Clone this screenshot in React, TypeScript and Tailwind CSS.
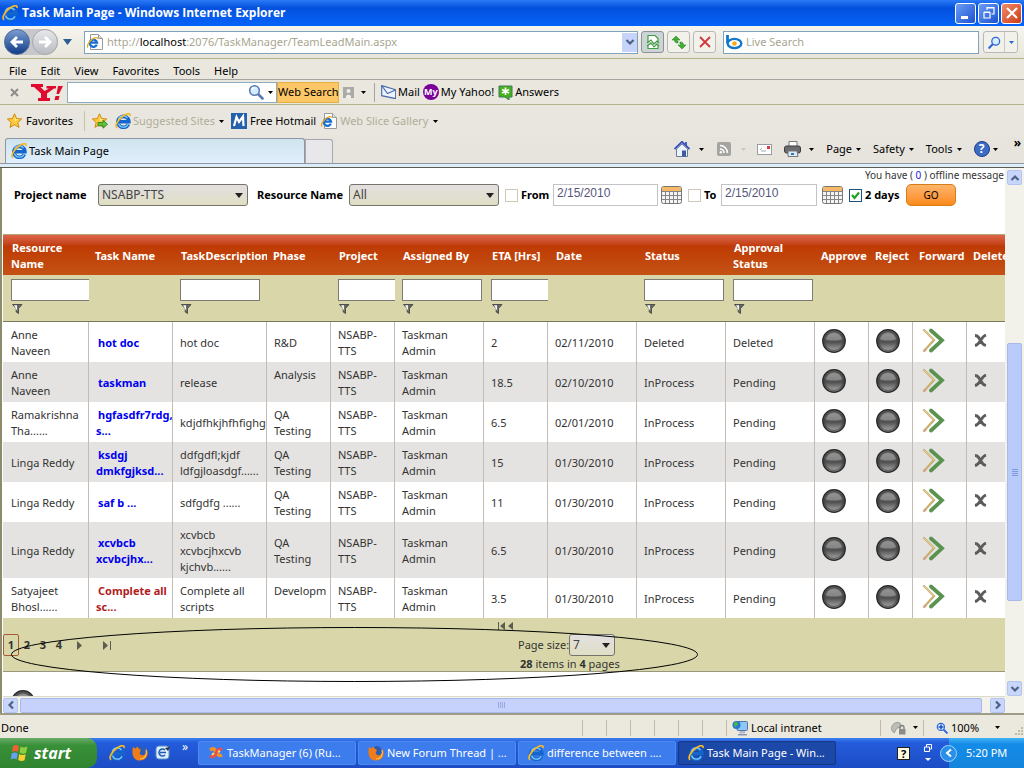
import type { ReactNode } from "react";

interface Task {
  resource: string[];
  name: string[];
  description: string[];
  phase: string[];
  eta: string;
  date: string;
  status: string;
  approval: string;
  closed?: boolean;
  tall?: boolean;
}

const tasks: Task[] = [
  { resource: ["Anne", "Naveen"], name: ["hot doc"], description: ["hot doc"], phase: ["R&D"], eta: "2", date: "02/11/2010", status: "Deleted", approval: "Deleted" },
  { resource: ["Anne", "Naveen"], name: ["taskman"], description: ["release"], phase: ["Analysis", "\u00a0"], eta: "18.5", date: "02/10/2010", status: "InProcess", approval: "Pending" },
  { resource: ["Ramakrishna", "Tha......"], name: ["hgfasdfr7rdg,", "s..."], description: ["kdjdfhkjhfhfighg"], phase: ["QA", "Testing"], eta: "6.5", date: "02/01/2010", status: "InProcess", approval: "Pending" },
  { resource: ["Linga Reddy"], name: ["ksdgj", "dmkfgjksd..."], description: ["ddfgdfl;kjdf", "ldfgjloasdgf......"], phase: ["QA", "Testing"], eta: "15", date: "01/30/2010", status: "InProcess", approval: "Pending" },
  { resource: ["Linga Reddy"], name: ["saf b ..."], description: ["sdfgdfg ......"], phase: ["QA", "Testing"], eta: "11", date: "01/30/2010", status: "InProcess", approval: "Pending" },
  { resource: ["Linga Reddy"], name: ["xcvbcb", "xcvbcjhx..."], description: ["xcvbcb", "xcvbcjhxcvb", "kjchvb......"], phase: ["QA", "Testing"], eta: "6.5", date: "01/30/2010", status: "InProcess", approval: "Pending", tall: true },
  { resource: ["Satyajeet", "Bhosl......"], name: ["Complete all", "sc..."], description: ["Complete all", "scripts"], phase: ["Developm", "\u00a0"], eta: "3.5", date: "01/30/2010", status: "InProcess", approval: "Pending", closed: true },
];

const columns: { lines: string[]; width: number; filter?: boolean; plain?: boolean }[] = [
  { lines: ["Resource", "Name"], width: 86, filter: true },
  { lines: ["Task Name"], width: 84, plain: true },
  { lines: ["TaskDescription"], width: 94, filter: true },
  { lines: ["Phase"], width: 64, plain: true },
  { lines: ["Project"], width: 64, filter: true },
  { lines: ["Assigned By"], width: 89, filter: true },
  { lines: ["ETA [Hrs]"], width: 64, filter: true },
  { lines: ["Date"], width: 89 },
  { lines: ["Status"], width: 89, filter: true },
  { lines: ["Approval", "Status"], width: 89, filter: true },
  { lines: ["Approve"], width: 54, plain: true },
  { lines: ["Reject"], width: 44, plain: true },
  { lines: ["Forward"], width: 54, plain: true },
  { lines: ["Delete"], width: 38, plain: true },
];

/* ---------- icons ---------- */

function IeIcon({ className = "size-4" }: { className?: string }) {
  return (
    <svg viewBox="0 0 16 16" className={`shrink-0 ${className}`} aria-hidden="true">
      <path d="M13.400 11.200A5.500 5.500 0 1 1 13.900 8.800H4" fill="none" stroke="#1466cc" strokeWidth="3.600" />
      <path d="M13 11.200A5 5 0 0 1 3.600 10.500M3.400 7a5 5 0 0 1 9-2" fill="none" stroke="#7cc8fa" strokeWidth="1.300" />
      <path d="M2.200 14.800C-.8 13.400 2.600 7 7.600 3.200 11.600.2 15.600-.4 15 3" fill="none" stroke="#f4b828" strokeWidth="1.700" />
    </svg>
  );
}

function PageIeIcon() {
  return (
    <svg viewBox="0 0 16 16" className="size-4 shrink-0" aria-hidden="true">
      <path d="M3.500 .500h8l4 4v11h-12z" fill="#fff" stroke="#9a9a9a" />
      <path d="M11.500 .500v4h4" fill="#ddd" stroke="#9a9a9a" />
      <path d="M9.800 10.600A3.600 3.600 0 1 1 10 8.600H3.500" fill="none" stroke="#1a6fd0" strokeWidth="2.400" />
      <path d="M1 13.400C-.6 12 2 7.600 5.600 5 8 3.300 10.400 3 10.800 4.600" fill="none" stroke="#f0a818" strokeWidth="1.300" />
    </svg>
  );
}

function Caret({ className = "text-black" }: { className?: string }) {
  return (
    <svg viewBox="0 0 5 3" className={`h-[3px] w-[5px] shrink-0 ${className}`} aria-hidden="true">
      <path d="M0 0h5L2.500 3z" fill="currentColor" />
    </svg>
  );
}

function Star({ arrow = false }: { arrow?: boolean }) {
  return (
    <svg viewBox="0 0 16 16" className="size-4 shrink-0" aria-hidden="true">
      <path d="M7.500.8l2.100 4.700 5.100.5-3.900 3.400 1.200 5-4.500-2.700-4.500 2.700 1.200-5L.4 6l5-.5z" fill="#ffc93a" stroke="#d08a10" />
      <path d="M7.500 3l1.200 3.300 3 .3L8 8z" fill="#fff3b0" />
      {arrow && <path d="M6 9.500h5V7.200l4.600 4-4.600 4v-2.400H6z" fill="#5cc23c" stroke="#2c7c1c" strokeWidth=".8" />}
    </svg>
  );
}

function Magnifier({ className = "size-4", color = "#2a66d8" }: { className?: string; color?: string }) {
  return (
    <svg viewBox="0 0 16 16" className={`shrink-0 ${className}`} aria-hidden="true">
      <path d="M9.500 9.500l5 5" stroke={color} strokeWidth="2.600" strokeLinecap="round" />
      <circle cx="6.500" cy="6.500" r="4.800" fill="#d4ecff" stroke={color} strokeWidth="1.600" />
      <path d="M3.800 6a3 3 0 0 1 3-2.400" fill="none" stroke="#fff" strokeWidth="1.200" />
    </svg>
  );
}

function Chevron({ turn = "" }: { turn?: string }) {
  return (
    <svg viewBox="0 0 10 10" className={`size-[10px] ${turn}`} aria-hidden="true">
      <path d="M1.500 3l3.500 3.500L8.500 3" fill="none" stroke="#4d6185" strokeWidth="2.200" />
    </svg>
  );
}

function Funnel() {
  return (
    <svg viewBox="0 0 11 10" className="h-[10px] w-[11px]" aria-hidden="true">
      <path d="M.5.5h9.500L6.500 4.500v5L4.200 8V4.500z" fill="#666" stroke="#3c3c3c" strokeWidth=".8" />
      <path d="M2 1.300h3L5.200 7z" fill="#f4f4f4" />
    </svg>
  );
}

function Orb() {
  return (
    <svg viewBox="0 0 24 24" className="size-6" aria-hidden="true">
      <defs>
        <linearGradient id="orb" x1="0" y1="0" x2="0" y2="1">
          <stop offset="0" stopColor="#7c7c7c" />
          <stop offset=".55" stopColor="#505050" />
          <stop offset="1" stopColor="#b4b4b4" />
        </linearGradient>
      </defs>
      <circle cx="12" cy="12" r="11.200" fill="url(#orb)" stroke="#2b2b2b" strokeWidth="1.400" />
      <path d="M4 10a8.300 8.300 0 0 1 16 0c-3 2-13 2-16 0z" fill="#c8c8c8" opacity=".4" />
      <circle cx="12" cy="12" r="9.600" fill="none" stroke="#383838" strokeWidth="1.600" opacity=".55" />
    </svg>
  );
}

function ForwardIcon() {
  return (
    <svg viewBox="0 0 23 25" className="h-[25px] w-[23px]" aria-hidden="true">
      <path d="M2 2l10 10L2 23" fill="none" stroke="#c8b070" strokeWidth="2.200" strokeLinecap="round" />
      <path d="M2 2l10 10" fill="none" stroke="#eadcae" strokeWidth=".8" />
      <path d="M9 2.500l11 9.800L9 22.500" fill="none" stroke="#5a9350" strokeWidth="3.800" strokeLinecap="round" />
      <circle cx="3" cy="22" r="1.300" fill="#e09a80" />
    </svg>
  );
}

function DeleteIcon() {
  return (
    <svg viewBox="0 0 13 13" className="size-[13px]" aria-hidden="true">
      <path d="M1 1.500c3 0 4 2 5.500 5S9.500 11 12 11.500M12 1C9 2 8 4 6.500 6.500S4 11 1 11.500" fill="none" stroke="#5c5c5c" strokeWidth="2.800" />
    </svg>
  );
}

function CalendarIcon() {
  return (
    <svg viewBox="0 0 21 18" className="h-[18px] w-[21px] shrink-0" aria-hidden="true">
      <rect x=".5" y=".5" width="20" height="17" rx="2" fill="#f4f4f4" stroke="#777" />
      <path d="M1 1h19v4H1z" fill="#f6b968" />
      <path d="M1 5.500h19M1 9.500h19M1 13.500h19M4.500 6v11M8.500 6v11M12.500 6v11M16.500 6v11" stroke="#858585" />
    </svg>
  );
}

/* ---------- browser chrome ---------- */

function TitleBar() {
  const button = "flex size-[21px] items-center justify-center rounded-[3px] border border-white";
  return (
    <header className="flex h-[26px] items-center bg-linear-to-b from-[#2a7af8] via-[#0450dc] via-30% to-[#0664fa] pr-[2px] pl-[2px]">
      <IeIcon />
      <h1 className="ml-1 flex-1 font-['Open_Sans','Noto_Sans',sans-serif] text-[12px] font-bold whitespace-nowrap text-white">
        Task Main Page - Windows Internet Explorer
      </h1>
      <div className="flex gap-[2px]">
        <button aria-label="Minimize" className={`${button} bg-linear-to-br from-[#6c9cf4] to-[#1c50d0]`}>
          <svg viewBox="0 0 14 14" className="size-[14px]"><path d="M2 10h7v3H2z" fill="#fff" /></svg>
        </button>
        <button aria-label="Restore" className={`${button} bg-linear-to-br from-[#6c9cf4] to-[#1c50d0]`}>
          <svg viewBox="0 0 14 14" className="size-[14px]">
            <path d="M5 4V1.500h7V8h-2.500M5 2h7M2 6.500h6V12H2zM2 6h6" fill="none" stroke="#fff" strokeWidth="1.200" />
          </svg>
        </button>
        <button aria-label="Close" className={`${button} bg-linear-to-br from-[#f08a68] to-[#cc3810]`}>
          <svg viewBox="0 0 14 14" className="size-[14px]"><path d="M2 2l10 10M12 2L2 12" stroke="#fff" strokeWidth="2.200" /></svg>
        </button>
      </div>
    </header>
  );
}

function AddressBar() {
  const button = "flex h-[22px] w-[23px] items-center justify-center rounded-[3px] border border-[#b8b8bc] bg-[#f2f1ea]";
  return (
    <div className="flex h-[33px] items-center border-b border-[#b5b487] bg-linear-to-b from-[#f6f5ee] to-[#e8e6dc] pr-[6px] pl-1">
      <div className="flex rounded-full bg-[#c8c8cc]">
        <button aria-label="Back" className="flex size-[26px] items-center justify-center rounded-full border border-[#4c6c98] bg-linear-to-b from-[#7c9cd0] to-[#123c88]">
          <svg viewBox="0 0 16 16" className="size-4"><path d="M14 8H3M8 3L3 8l5 5" fill="none" stroke="#fff" strokeWidth="2.800" /></svg>
        </button>
        <button aria-label="Forward" className="ml-[2px] flex size-[26px] items-center justify-center rounded-full border border-[#a8a8ac] bg-linear-to-b from-[#e8e8ec] to-[#b8bcc0]">
          <svg viewBox="0 0 16 16" className="size-4"><path d="M2 8h11M8 3l5 5-5 5" fill="none" stroke="#fff" strokeWidth="2.800" /></svg>
        </button>
      </div>
      <button aria-label="Recent pages" className="mx-[5px]">
        <svg viewBox="0 0 9 6" className="h-[6px] w-[9px]"><path d="M0 0h9L4.500 6z" fill="#2c5c90" /></svg>
      </button>
      <div className="ml-[7px] flex h-[23px] flex-1 items-center border border-[#7fa3bd] bg-white pl-[2px]">
        <PageIeIcon />
        <span className="ml-1 flex-1 whitespace-nowrap text-[#a8a690]">
          http://<span className="text-black">localhost</span>:2076/TaskManager/TeamLeadMain.aspx
        </span>
        <button aria-label="Show address list" className="flex h-[19px] w-[15px] items-center justify-center bg-[#c6d3fb]"><Chevron /></button>
      </div>
      <div className="mx-[3px] flex gap-[3px]">
        <button aria-label="Compatibility view" className="flex h-[22px] w-[23px] items-center justify-center rounded-[3px] border border-[#8a9298] bg-[#ccd4d8]">
          <svg viewBox="0 0 14 16" className="h-4 w-[14px]">
            <path d="M2 8V1.500h7l3 3V8M2 11v3.500h10V11" fill="#fff" stroke="#3fa03c" strokeWidth="1.200" />
            <path d="M1 9l4-3 3 4 3-3 2 2M1 12l4-3 3 4 3-3 2 2" fill="none" stroke="#3fa03c" strokeWidth="1.100" />
          </svg>
        </button>
        <button aria-label="Refresh" className={button}>
          <svg viewBox="0 0 16 16" className="size-4">
            <path d="M5 1L1 5h2.500c0 2 1 3 3.500 3V6C6 6 6 5.500 6 5h3z" fill="#3fae34" stroke="#2c8a28" strokeWidth=".6" transform="translate(0 1)" />
            <path d="M11 15l4-4h-2.500c0-2-1-3-3.500-3v2c1 0 1 .5 1 1H7z" fill="#3fae34" stroke="#2c8a28" strokeWidth=".6" />
          </svg>
        </button>
        <button aria-label="Stop" className={button}>
          <svg viewBox="0 0 12 12" className="size-3"><path d="M1 1l10 10M11 1L1 11" stroke="#d0383c" strokeWidth="1.800" /></svg>
        </button>
      </div>
      <label className="ml-1 flex h-[23px] w-[256px] items-center border border-[#7fa3bd] bg-white pl-[2px]">
        <svg viewBox="0 0 17 16" className="h-4 w-[17px] shrink-0" aria-hidden="true">
          <path d="M1.500 1v8.500" stroke="#1478c8" strokeWidth="2.800" />
          <ellipse cx="8.500" cy="9.500" rx="6.800" ry="4.600" fill="#fff" stroke="#1478c8" strokeWidth="2.400" />
          <circle cx="8.500" cy="9.500" r="2.300" fill="#f8a818" />
        </svg>
        <input aria-label="Live Search" placeholder="Live Search" className="ml-[3px] w-full outline-none placeholder:text-[#a8a690]" />
      </label>
      <div className="ml-1 flex h-[22px] w-[35px] items-center rounded-[3px] border border-[#b8b8bc] bg-[#f2f1ea]">
        <button aria-label="Search" className="flex h-full w-[21px] items-center justify-center border-r border-[#c8c8c8]">
          <Magnifier className="size-[13px] -scale-x-100" />
        </button>
        <button aria-label="Search options" className="flex flex-1 justify-center"><Caret className="text-[#2468d0]" /></button>
      </div>
    </div>
  );
}

function MenuBar() {
  return (
    <nav className="flex h-[21px] items-center gap-[14px] border-b border-[#a4a4a0] bg-[#e9e7de] pt-1 pl-[9px]">
      {["File", "Edit", "View", "Favorites", "Tools", "Help"].map((item) => (
        <button key={item}>{item}</button>
      ))}
    </nav>
  );
}

function YahooToolbar() {
  return (
    <div className="flex h-[25px] items-center border-b border-[#b5b487] bg-[#e9e7de] pl-[10px]">
      <button aria-label="Close toolbar">
        <svg viewBox="0 0 9 9" className="size-[9px]"><path d="M1 1l7 7M8 1L1 8" stroke="#8c8c8c" strokeWidth="2" /></svg>
      </button>
      <svg viewBox="0 0 32 17" className="mr-1 ml-3 h-[17px] w-8 shrink-0" role="img" aria-label="Yahoo!">
        <path d="M0 0h12v3H9.500l4 4L18 4.500h-2.500V2H25v2.500h-2l-7 5V14h3v3H7v-3h3V9.500L3 3H0z" fill="#e00c30" />
        <path d="M27 2h5l-4 8h-2.500zM24.500 12h4l-1 4h-4z" fill="#e00c30" />
      </svg>
      <div className="flex h-[21px] w-[210px] items-center border border-[#8cacc4] bg-white pr-[3px]">
        <input aria-label="Yahoo search" className="w-full min-w-0 outline-none" />
        <Magnifier className="size-4" color="#5a7ab0" />
        <button aria-label="Search history" className="ml-1"><Caret /></button>
      </div>
      <button className="h-[21px] w-[62px] border border-[#e4b040] bg-[#fdc767] whitespace-nowrap">Web Search</button>
      <svg viewBox="0 0 12 11" className="ml-1 h-[11px] w-3" aria-hidden="true">
        <path d="M0 0h11v11H8V9H3v2H0z" fill="#aaaaa8" /><circle cx="5.500" cy="4" r="2" fill="#f0efe8" /><path d="M3 9a3 3 0 0 1 5 0v2H3z" fill="#f0efe8" />
      </svg>
      <span className="mx-[6px] flex"><Caret /></span>
      <span className="mr-[6px] ml-[2px] h-[19px] w-px bg-[#a4a4a0]" />
      <button className="flex items-center gap-[2px]">
        <svg viewBox="0 0 15 14" className="h-[14px] w-[15px]" aria-hidden="true">
          <path d="M.7.700l14 4v9l-14-3z" fill="#eef4ff" stroke="#4c6ca8" strokeWidth="1.200" />
          <path d="M1 1l5.500 7.500L14.500 5" fill="none" stroke="#4c6ca8" strokeWidth="1.200" />
        </svg>
        Mail
      </button>
      <button className="ml-[3px] flex items-center gap-[2px]">
        <span className="flex size-4 items-center justify-center rounded-full bg-[#7b0099] text-[9px] font-bold text-white">My</span>
        My Yahoo!
      </button>
      <button className="ml-1 flex items-center gap-[2px]">
        <svg viewBox="0 0 15 15" className="size-[15px]" aria-hidden="true">
          <path d="M1 1h13v11h-3v3l-4-3H1z" fill="#49b01c" stroke="#3a7c5c" />
          <path d="M7.500 2.500v7.500M4 4.500l7 3.500M11 4.500L4 8" stroke="#fff" strokeWidth="1.700" />
        </svg>
        Answers
      </button>
    </div>
  );
}

function FavoritesBar() {
  return (
    <div className="flex h-8 items-center bg-[#e8e6de] pl-[7px]">
      <button className="flex items-center gap-[3px]"><Star />Favorites</button>
      <span className="mr-[7px] ml-[11px] h-5 w-px bg-[#c8c49c]" />
      <button aria-label="Add to favorites bar"><Star arrow /></button>
      <a href="#suggested" className="ml-[7px] flex items-center gap-[2px] text-[#b0ae98]"><IeIcon />Suggested Sites<span className="ml-[2px]"><Caret /></span></a>
      <a href="#hotmail" className="ml-[7px] flex items-center gap-[3px]">
        <svg viewBox="0 0 16 16" className="size-4" aria-hidden="true">
          <rect width="16" height="16" fill="#2460ac" />
          <path d="M3 13l2.500-9L8 9l4-5.500L12.500 13" fill="none" stroke="#fff" strokeWidth="2.200" />
        </svg>
        Free Hotmail
      </a>
      <a href="#gallery" className="ml-[5px] flex items-center gap-[3px] text-[#b0ae98]"><PageIeIcon />Web Slice Gallery<span className="ml-[2px]"><Caret /></span></a>
    </div>
  );
}

function TabBar() {
  return (
    <div className="flex h-[31px] flex-col bg-[#e6e4dd]">
      <div className="flex flex-1 items-end border-b border-[#8e98a4] pl-[5px]">
        <button className="flex h-[25px] w-[300px] shrink-0 items-center gap-[2px] rounded-t-[3px] border border-b-0 border-[#8e98a4] bg-linear-to-b from-[#cfe4ee] to-[#e0f0fc] pl-[5px]">
          <IeIcon />Task Main Page
        </button>
        <button aria-label="New tab" className="h-6 w-7 rounded-tr-[3px] border border-b-0 border-[#a8a8ac] bg-[#e8e8ea]" />
        <div className="ml-auto flex h-6 items-center self-start pr-[3px]">
          <svg viewBox="0 0 16 16" className="size-4" aria-label="Home" role="img">
            <path d="M2.500 8v7.500h11V8L8 3z" fill="#eef2fa" stroke="#6c7c9c" /><path d="M.5 8L8 .8 15.500 8M12 1v3.500" fill="none" stroke="#3850b8" strokeWidth="1.800" /><path d="M8 9.500h4v6H8z" fill="#3c5c9c" />
          </svg>
          <span className="ml-[9px]"><Caret /></span>
          <svg viewBox="0 0 14 14" className="ml-[13px] size-[14px]" aria-label="Feeds" role="img">
            <rect width="14" height="14" rx="2" fill="#a4a4a0" /><path d="M3 7a4 4 0 0 1 4 4M3 3.500A7.500 7.500 0 0 1 10.500 11" fill="none" stroke="#fff" strokeWidth="1.600" /><circle cx="3.800" cy="10.200" r="1.200" fill="#fff" />
          </svg>
          <span className="ml-[10px]"><Caret className="text-[#c8c8c0]" /></span>
          <svg viewBox="0 0 15 11" className="ml-[11px] h-[11px] w-[15px]" aria-label="Read mail" role="img">
            <rect x=".5" y=".5" width="14" height="10" fill="#fff" stroke="#9c9ca0" /><path d="M3 6l2-2M4 7h5" stroke="#a8a8ac" /><path d="M10 2h3v3h-3z" fill="#d84040" />
          </svg>
          <svg viewBox="0 0 17 16" className="ml-3 h-4 w-[17px]" aria-label="Print" role="img">
            <path d="M5 .500h8V6H5z" fill="#fff" stroke="#787878" /><rect x=".5" y="5" width="16" height="7" rx="2" fill="#6c6c70" stroke="#3c3c40" /><path d="M4 10h9l1 5.500H4z" fill="#dcecf8" stroke="#787878" /><path d="M7 12h3v2H7z" fill="#2c78b8" />
          </svg>
          <span className="mr-3 ml-2"><Caret /></span>
          {["Page", "Safety", "Tools"].map((item) => (
            <button key={item} className="mr-3 flex items-center gap-1">{item}<Caret /></button>
          ))}
          <span className="mr-[3px] flex size-4 items-center justify-center rounded-full border border-[#1c3c84] bg-[#3c6cc8] text-[12px] font-bold text-white">?</span>
          <Caret />
          <span className="mb-3 ml-4 text-[12px] leading-none font-bold">»</span>
        </div>
      </div>
      <div className="h-1 border-b border-[#5c5c4c] bg-[#dcecf8]" />
    </div>
  );
}

/* ---------- task page ---------- */

function GridSelect({ id, value, className }: { id: string; value: string; className: string }) {
  return (
    <div className={`relative ${className}`}>
      <select id={id} className="h-[22px] w-full appearance-none rounded-[3px] border border-[#74746c] bg-linear-to-b from-[#e2dfe0] to-[#e0dfc4] pl-[3px] text-[12px] leading-none font-normal text-[#444] outline-none">
        <option>{value}</option>
      </select>
      <svg viewBox="0 0 8 5" className="pointer-events-none absolute top-[9px] right-[5px] h-[5px] w-2"><path d="M0 0h8L4 5z" fill="#222" /></svg>
    </div>
  );
}

function DateField({ id, width }: { id: string; width: string }) {
  return (
    <input id={id} defaultValue="2/15/2010" className={`h-[22px] border border-[#c4c4c8] bg-white pb-1 pl-[3px] font-['Liberation_Sans','Arial',sans-serif] text-[12px] font-normal text-[#56567c] outline-none ${width}`} />
  );
}

function FilterForm() {
  const box = "size-[13px] shrink-0 appearance-none border border-[#cfcab8] bg-white";
  return (
    <form className="flex h-[66px] flex-col" onSubmit={(e) => e.preventDefault()}>
      <p className="h-4 pr-px text-right text-[10px] leading-[14px] text-[#333]">
        You have ( <a href="#messages" className="text-[#2020e0]">0</a> ) offline message
      </p>
      <div className="flex h-[22px] items-center pl-[11px] text-[11px] font-bold whitespace-nowrap text-black">
        <label htmlFor="project" className="w-[84px]">Project name</label>
        <GridSelect id="project" value="NSABP-TTS" className="w-[150px]" />
        <label htmlFor="resource" className="ml-[9px] w-[92px]">Resource Name</label>
        <GridSelect id="resource" value="All" className="w-[150px]" />
        <input id="useFrom" type="checkbox" className={`ml-[6px] ${box}`} />
        <label htmlFor="useFrom" className="w-[35px] pl-[3px]">From</label>
        <DateField id="from" width="w-[105px]" />
        <button type="button" aria-label="Pick from date" className="ml-[3px]"><CalendarIcon /></button>
        <input id="useTo" type="checkbox" className={`ml-[6px] ${box}`} />
        <label htmlFor="useTo" className="w-5 pl-[3px]">To</label>
        <DateField id="to" width="w-[96px]" />
        <button type="button" aria-label="Pick to date" className="ml-[5px]"><CalendarIcon /></button>
        <span className="relative ml-[6px] flex">
          <input id="days" type="checkbox" defaultChecked className="size-[13px] appearance-none border border-[#1c5180] bg-white" />
          <svg viewBox="0 0 13 13" className="pointer-events-none absolute inset-0 size-[13px]"><path d="M3 6l2.500 3L10 3.500" fill="none" stroke="#21a121" strokeWidth="2.200" /></svg>
        </span>
        <label htmlFor="days" className="w-[44px] pl-[3px]">2 days</label>
        <button className="h-[22px] w-[50px] rounded-[5px] border border-[#d87c18] bg-linear-to-b from-[#fdb468] to-[#fb8a14] text-[10px] font-normal">GO</button>
      </div>
    </form>
  );
}

function Lines({ lines, first = "" }: { lines: string[]; first?: string }) {
  return (
    <>
      {lines.map((line, i) => (
        <span key={line} className={i === 0 ? `block ${first}` : "block"}>{line}</span>
      ))}
    </>
  );
}

function Cell({ children }: { children: ReactNode }) {
  return (
    <td className="overflow-hidden border-r border-[#c4bcb4] p-0 pt-px pl-[7px] align-middle whitespace-nowrap first:pl-2 last:border-r-0">
      {children}
    </td>
  );
}

function TaskTable() {
  return (
    <table className="w-full table-fixed border-separate border-spacing-0 text-[11px] leading-4 text-[#333]">
      <colgroup>
        {columns.map((col) => (
          <col key={col.lines.join(" ")} style={{ width: col.width }} />
        ))}
      </colgroup>
      <thead>
        <tr className="h-[41px] bg-linear-to-b from-[#df6a4c] via-[#bf3a04] via-30% to-[#c45214] text-white">
          {columns.map((col) => (
            <th
              key={col.lines.join(" ")}
              className={`overflow-hidden border-t border-[#b4a878] p-0 pt-[2px] text-left align-middle font-bold whitespace-nowrap ${col.plain ? "pl-[6px]" : "pl-[7px] first:pl-2"}`}
            >
              <Lines lines={col.lines} first={col.plain ? "" : "indent-px"} />
            </th>
          ))}
        </tr>
        <tr className="h-[47px] bg-[#d9d7aa]">
          {columns.map((col) => (
            <td key={col.lines.join(" ")} className="overflow-hidden border-b border-[#78785c] p-0 pt-1 pl-[7px] align-top first:pl-2">
              {col.filter && (
                <>
                  <input aria-label={`Filter ${col.lines.join(" ")}`} className="block h-[22px] w-20 max-w-none border border-[#7c7c74] bg-white" />
                  <button aria-label="Filter options" className="mt-[3px] block pl-px"><Funnel /></button>
                </>
              )}
            </td>
          ))}
        </tr>
      </thead>
      <tbody>
        {tasks.map((task, i) => (
          <tr key={i} className={`${task.tall ? "h-14" : "h-10"} ${i % 2 ? "bg-[#e5e3e1]" : "bg-white"}`}>
            <Cell><Lines lines={task.resource} /></Cell>
            <Cell>
              <a href="#task" className={`font-bold ${task.closed ? "text-[#b01c1c]" : "text-[#0000f0]"}`}><Lines lines={task.name} first="indent-0.5" /></a>
            </Cell>
            <Cell><Lines lines={task.description} /></Cell>
            <Cell><Lines lines={task.phase} /></Cell>
            <Cell><Lines lines={["NSABP-", "TTS"]} /></Cell>
            <Cell><Lines lines={["Taskman", "Admin"]} /></Cell>
            <Cell>{task.eta}</Cell>
            <Cell>{task.date}</Cell>
            <Cell>{task.status}</Cell>
            <Cell>{task.approval}</Cell>
            <Cell><button aria-label="Approve" className="block pb-1"><Orb /></button></Cell>
            <Cell><button aria-label="Reject" className="block pb-1"><Orb /></button></Cell>
            <Cell><button aria-label="Forward" className="block pb-1 pl-[2px]"><ForwardIcon /></button></Cell>
            <Cell><button aria-label="Delete" className="block pb-1"><DeleteIcon /></button></Cell>
          </tr>
        ))}
      </tbody>
    </table>
  );
}

function Pager() {
  return (
    <div className="h-[54px] border-b border-[#98987c] bg-[#d9d7aa] text-[11px] leading-4 text-[#333]">
      <div className="flex h-4 justify-center pt-1 pl-1">
        <svg viewBox="0 0 16 8" className="h-2 w-4"><path d="M.5 0v8" stroke="#5c5c50" /><path d="M7 0v8L2 4zM15 0v8l-5-4z" fill="#5c5c50" /></svg>
      </div>
      <div className="grid grid-cols-2">
        <div className="flex h-[22px] items-center font-bold">
          <button className="h-[22px] w-4 rounded-[2px] border border-[#a85c34]">1</button>
          {["2", "3", "4"].map((page) => (
            <button key={page} className="w-4">{page}</button>
          ))}
          <button aria-label="Next page" className="ml-[10px]">
            <svg viewBox="0 0 5 9" className="h-[9px] w-[5px]"><path d="M0 0v9l5-4.500z" fill="#5c5c50" /></svg>
          </button>
          <button aria-label="Last page" className="ml-[21px]">
            <svg viewBox="0 0 8 9" className="h-[9px] w-2"><path d="M0 0v9l5-4.500z" fill="#5c5c50" /><path d="M7.500 0v9" stroke="#5c5c50" /></svg>
          </button>
        </div>
        <div className="pl-[14px]">
          <div className="flex h-[22px] items-center">
            <label htmlFor="pageSize" className="w-[51px] whitespace-nowrap">Page size:</label>
            <GridSelect id="pageSize" value="7" className="w-[46px]" />
          </div>
          <p className="pl-[2px]"><b>28</b> items in <b>4</b> pages</p>
        </div>
      </div>
    </div>
  );
}

function TaskPage() {
  const scrollButton = "flex size-[15px] shrink-0 items-center justify-center rounded-[2px] border border-[#b4c4f0] bg-[#c8d6fb]";
  return (
    <div className="flex flex-1 border-l-2 border-[#8c8c6c] bg-white pl-px">
      <main className="flex min-w-0 flex-1 flex-col overflow-hidden">
        <FilterForm />
        <TaskTable />
        <div className="relative">
          <Pager />
          {/* hand-drawn marker around the pager */}
          <svg viewBox="0 0 690 56" className="pointer-events-none absolute top-[9px] left-2 h-14 w-[690px]" aria-hidden="true">
            <ellipse cx="343.500" cy="27.500" rx="343" ry="27" fill="none" stroke="#000" />
          </svg>
        </div>
        <div className="flex h-6 items-end pl-2">
          <div className="h-[6px] w-6 overflow-hidden"><Orb /></div>
        </div>
        <div className="flex h-[17px] items-center border-t border-[#dcdccc] bg-[#f2f1ea]">
          <button aria-label="Scroll left" className={scrollButton}><Chevron turn="rotate-90" /></button>
          <div className="ml-[2px] flex h-[15px] flex-1 items-center justify-center gap-px rounded-[2px] border border-[#a8b8e8] bg-[#c6d2fc]">
            {[0, 1, 2, 3].map((n) => <span key={n} className="h-[6px] w-px bg-[#98a8e0]" />)}
          </div>
          <button aria-label="Scroll right" className={`ml-2 ${scrollButton}`}><Chevron turn="-rotate-90" /></button>
        </div>
      </main>
      <div className="flex w-[19px] shrink-0 flex-col items-center bg-[#f2f1ea] pt-[2px] pb-[17px]">
        <button aria-label="Scroll up" className={scrollButton}><Chevron turn="rotate-180" /></button>
        <div className="mt-[158px] flex h-[258px] w-[15px] flex-col items-center justify-center gap-px rounded-[2px] border border-[#a8b8e8] bg-[#b9cbfb]">
          {[0, 1, 2, 3].map((n) => <span key={n} className="h-px w-[6px] bg-[#7c98e0]" />)}
        </div>
        <button aria-label="Scroll down" className={`mt-auto ${scrollButton}`}><Chevron /></button>
      </div>
    </div>
  );
}

/* ---------- status bar and taskbar ---------- */

function StatusBar() {
  const pane = "flex h-4 items-center border-l border-[#c0bca8]";
  return (
    <div className="flex h-[25px] items-center border-t-2 border-[#9c9c88] bg-[#ebe9dd] pt-[2px]">
      <span className="flex-1 pl-px">Done</span>
      {[0, 1, 2, 3, 4, 5].map((n) => <span key={n} className={`w-6 ${pane}`} />)}
      <span className={`w-[154px] gap-[3px] pl-[5px] ${pane}`}>
        <svg viewBox="0 0 16 16" className="size-4" aria-hidden="true">
          <rect x="5" y="1.500" width="10.500" height="9" rx="1" fill="#8cc8f8" stroke="#5874a8" /><path d="M8 11h5v2.500H7z" fill="#b8b8c8" /><path d="M6 14h9v1.500H6z" fill="#8898b8" /><circle cx="4.500" cy="5" r="4" fill="#2878d0" /><path d="M2 3c2-2 4-1 4 1S3 5 3 8z" fill="#4cb83c" />
        </svg>
        Local intranet
      </span>
      <span className={`w-[43px] gap-[7px] pl-[10px] ${pane}`}>
        <svg viewBox="0 0 15 14" className="h-[14px] w-[15px]" aria-hidden="true">
          <path d="M0 8c1-5 5-8 9-6l1 4-4 1-3 5z" fill="#bcbcb8" stroke="#9c9c98" /><path d="M9 8V6.500a2 2 0 0 1 4 0V8" fill="none" stroke="#7c7c78" strokeWidth="1.300" /><rect x="8" y="8" width="6.500" height="5.500" fill="#8c8c88" />
        </svg>
        <Caret />
      </span>
      <span className={`w-[101px] pl-3 ${pane}`}>
        <span className="relative flex">
          <Magnifier className="size-3" />
          <svg viewBox="0 0 12 12" className="absolute inset-0 size-3"><path d="M2.500 5h5M5 2.500v5" stroke="#1c4cc8" strokeWidth="1.500" /></svg>
        </span>
        <span className="ml-[3px] flex-1">100%</span>
        <Caret />
        <svg viewBox="0 0 10 10" className="ml-[14px] size-[10px] self-end" aria-hidden="true">
          <path d="M7 1h2v2H7zM4 4h2v2H4zM7 4h2v2H7zM1 7h2v2H1zM4 7h2v2H4zM7 7h2v2H7z" fill="#c0bca8" />
        </svg>
      </span>
    </div>
  );
}

function FirefoxIcon() {
  return (
    <svg viewBox="0 0 16 16" className="size-4 shrink-0" aria-hidden="true">
      <circle cx="8.500" cy="7" r="6" fill="#2c5cb8" />
      <path d="M1 2l2.500 1.500 2-2L7 4c2 0 2 2 1 3-1 2 1 4 4 3 2-1 3-3 1.500-7C17 6 17 15 8 15.500.5 15.500-.5 8 1 2z" fill="#ee7c18" />
      <path d="M14 5c1.500 4-1 9-6 9" fill="none" stroke="#fcc840" strokeWidth="1.200" />
    </svg>
  );
}

function TaskManagerIcon() {
  return (
    <svg viewBox="0 0 16 14" className="h-[14px] w-4 shrink-0" aria-hidden="true">
      <path d="M2 4c3-2 4-2 6 2s4 4 6 3" fill="none" stroke="#f09028" strokeWidth="3.400" />
      <path d="M2 10c3 2 5 0 6-3s4-5 6-3" fill="none" stroke="#e8504c" strokeWidth="3" />
      <path d="M4 9l2-2M10 6l2-1" stroke="#f8d860" strokeWidth="2" />
    </svg>
  );
}

const windows: { title: string; icon: ReactNode; active?: boolean }[] = [
  { title: "TaskManager (6) (Ru...", icon: <TaskManagerIcon /> },
  { title: "New Forum Thread | ...", icon: <FirefoxIcon /> },
  { title: "difference between ....", icon: <IeIcon /> },
  { title: "Task Main Page - Win...", icon: <IeIcon />, active: true },
];

function Taskbar() {
  return (
    <footer className="flex h-[30px] items-center bg-linear-to-b from-[#3c80ee] via-[#245cdc] via-15% to-[#1c4cc4] text-white">
      <button className="flex h-full w-[97px] shrink-0 items-center gap-1 rounded-r-[10px] bg-linear-to-b from-[#68ac68] via-[#389038] via-25% to-[#2f8430] pl-[10px] font-['Open_Sans','Noto_Sans',sans-serif] text-[16px] font-bold italic">
        <svg viewBox="0 0 20 18" className="h-[18px] w-5" aria-hidden="true">
          <path d="M3 2c2-1.500 4-1.500 6 0L8 8C6 6.800 4 6.800 2 8z" fill="#f06030" /><path d="M10.500 2.500c2 1.200 4 1.200 7 0L16 9c-2 1-4 1-6.500-.5z" fill="#8cd040" />
          <path d="M1.700 9.500c2-1.200 4-1.200 6 0l-1 6c-2-1.200-4-1.200-6 0z" fill="#68a0f4" /><path d="M9.200 10c2 1.200 4 1.200 6.500.2l-1.200 6c-2 1-4 1-6.300-.3z" fill="#fcd030" />
        </svg>
        start
      </button>
      <div className="flex w-[101px] shrink-0 items-center gap-[7px] pl-3">
        <IeIcon />
        <FirefoxIcon />
        <svg viewBox="0 0 16 16" className="size-4" aria-hidden="true">
          <rect x="1" y="1" width="13" height="13" rx="3" fill="#dceefa" stroke="#5c90c8" /><path d="M10 5a3.500 3.500 0 1 0 0 5M5 7.500h6" fill="none" stroke="#1c58b0" strokeWidth="1.600" /><path d="M10 3l5-1-2 4z" fill="#303030" />
        </svg>
        <span className="mb-3 ml-1 text-[12px] leading-none">»</span>
      </div>
      <div className="flex min-w-0 flex-1 gap-[2px]">
        {windows.map((win) => (
          <button
            key={win.title}
            className={`flex h-6 w-[158px] items-center gap-[3px] overflow-hidden rounded-[2px] border pl-[9px] whitespace-nowrap ${
              win.active ? "border-[#143884] bg-[#1c48a8]" : "border-[#4c8cf0] bg-[#3c7cec]"
            }`}
          >
            {win.icon}
            {win.title}
          </button>
        ))}
      </div>
      <div className="flex items-center gap-[14px] pr-[17px]">
        <span className="flex size-[13px] items-center justify-center border border-[#202020] bg-[#fffce0] text-[11px] leading-none font-bold text-black">?</span>
        <svg viewBox="0 0 8 18" className="h-[18px] w-2" aria-hidden="true">
          <path d="M2.500 3V.500h5V5H5.500M.500 3h5v4.500h-5z" fill="none" stroke="#fff" /><path d="M1 14h6l-3 3z" fill="#fff" />
        </svg>
      </div>
      <div className="flex h-full w-[75px] shrink-0 items-center bg-linear-to-b from-[#40b4f4] via-[#148ce8] via-20% to-[#1484dc]">
        <button aria-label="Show hidden icons" className="-ml-[9px] flex size-[17px] shrink-0 items-center justify-center rounded-full border border-[#a0d4f8] bg-[#2890e8]">
          <svg viewBox="0 0 10 10" className="size-[10px]"><path d="M7 1.500L3 5l4 3.500" fill="none" stroke="#fff" strokeWidth="2" /></svg>
        </button>
        <span className="ml-[9px] whitespace-nowrap">5:20 PM</span>
      </div>
    </footer>
  );
}

export default function App() {
  return (
    <div className="flex min-h-screen flex-col bg-[#ece9d8] font-['Noto_Sans','Open_Sans',sans-serif] text-[11px] leading-4 text-black">
      <TitleBar />
      <AddressBar />
      <MenuBar />
      <YahooToolbar />
      <FavoritesBar />
      <TabBar />
      <TaskPage />
      <StatusBar />
      <Taskbar />
    </div>
  );
}
